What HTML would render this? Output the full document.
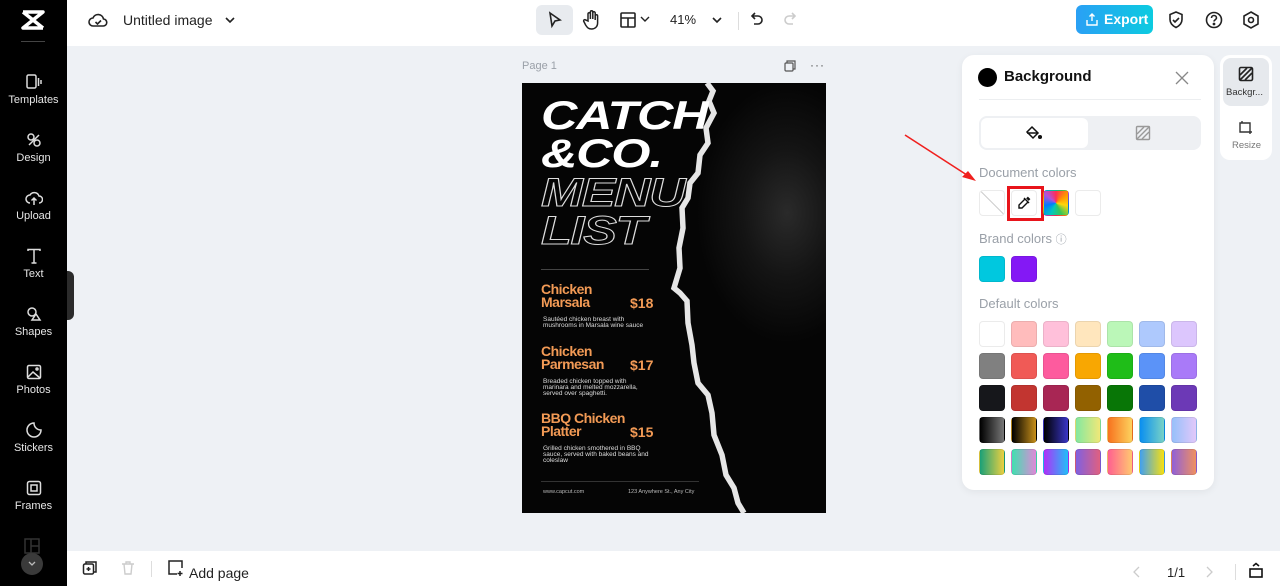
<!DOCTYPE html>
<html><head><meta charset="utf-8"><style>
*{box-sizing:border-box;margin:0;padding:0}
body{width:1280px;height:586px;overflow:hidden;background:#eef1f5;font-family:"Liberation Sans",sans-serif;position:relative;color:#1f2329}
.abs{position:absolute}
#side{left:0;top:0;width:67px;height:586px;background:#000}
.si{position:absolute;left:0;width:67px;text-align:center;color:#e6e6e6;font-size:11px}
.si svg{display:block;margin:0 auto 3px}
#top{left:67px;top:0;width:1213px;height:46px;background:#fff}
#bot{left:67px;top:551px;width:1213px;height:35px;background:#fff}
#panel{left:962px;top:55px;width:252px;height:435px;background:#fff;border-radius:12px;box-shadow:0 2px 8px rgba(0,0,0,.06)}
.sw{position:absolute;width:26px;height:26px;border-radius:4px;border:1px solid rgba(0,0,0,.08)}
.lbl{position:absolute;left:17px;font-size:13px;color:#9aa0a8}
.ttl{position:absolute;left:19px;font-size:40px;font-weight:bold;font-style:italic;line-height:38px;letter-spacing:-1px;transform:scaleX(1.26);transform-origin:0 0}
</style></head><body>
<div id="side" class="abs">
 <svg class="abs" style="left:20px;top:9px" width="26" height="22" viewBox="0 0 26 22"><path d="M3 3h20L3 19h20M3 3l20 16" stroke="#fff" stroke-width="3.5" fill="none" stroke-linejoin="round"/></svg>
 <div class="abs" style="left:21px;top:41px;width:24px;height:1px;background:#444"></div>
 <div class="si" style="top:73px"><svg width="18" height="18" viewBox="0 0 18 18" fill="none" stroke="#ddd" stroke-width="1.5"><rect x="2" y="2" width="9" height="13" rx="1.5"/><path d="M13.5 5v8M16 7v4"/></svg>Templates</div>
 <div class="si" style="top:131px"><svg width="18" height="18" viewBox="0 0 18 18" fill="none" stroke="#ddd" stroke-width="1.5"><circle cx="6" cy="6" r="3"/><circle cx="12" cy="12" r="3"/><path d="M4 14L14 4"/></svg>Design</div>
 <div class="si" style="top:189px"><svg width="18" height="18" viewBox="0 0 18 18" fill="none" stroke="#ddd" stroke-width="1.5"><path d="M5 14a4 4 0 010-8 5 5 0 019 1 3.5 3.5 0 010 7M9 16V9M6.5 11.5L9 9l2.5 2.5"/></svg>Upload</div>
 <div class="si" style="top:247px"><svg width="18" height="18" viewBox="0 0 18 18" fill="none" stroke="#ddd" stroke-width="1.5"><path d="M3 4V2.5h12V4M9 2.5V16M6.5 16h5"/></svg>Text</div>
 <div class="si" style="top:305px"><svg width="18" height="18" viewBox="0 0 18 18" fill="none" stroke="#ddd" stroke-width="1.5"><circle cx="7" cy="7" r="4"/><path d="M11 9l4 6H7z"/></svg>Shapes</div>
 <div class="si" style="top:363px"><svg width="18" height="18" viewBox="0 0 18 18" fill="none" stroke="#ddd" stroke-width="1.5"><rect x="2.5" y="2.5" width="13" height="13" rx="1.5"/><path d="M3 14l5-5 7 6"/><circle cx="12" cy="6" r="1"/></svg>Photos</div>
 <div class="si" style="top:421px"><svg width="18" height="18" viewBox="0 0 18 18" fill="none" stroke="#ddd" stroke-width="1.5"><path d="M16 9a7 7 0 11-7-7c0 4 3 7 7 7z"/></svg>Stickers</div>
 <div class="si" style="top:479px"><svg width="18" height="18" viewBox="0 0 18 18" fill="none" stroke="#ddd" stroke-width="1.5"><rect x="2.5" y="2.5" width="13" height="13" rx="2"/><rect x="6" y="6" width="6" height="6"/></svg>Frames</div>
 <svg class="abs" style="left:24px;top:538px" width="16" height="16" viewBox="0 0 16 16" fill="none" stroke="#333" stroke-width="1.5"><rect x="1" y="1" width="14" height="14"/><path d="M7 1v14M7 8h8"/></svg>
 <div class="abs" style="left:21px;top:553px;width:22px;height:22px;border-radius:50%;background:#3a3a3a"></div>
 <svg class="abs" style="left:27px;top:560px" width="10" height="8" viewBox="0 0 10 8"><path d="M2 2l3 3 3-3" stroke="#bbb" fill="none" stroke-width="1.3"/></svg>
</div>
<div class="abs" style="left:67px;top:271px;width:7px;height:49px;background:#2b2b2b;border-radius:0 6px 6px 0"></div>
<div id="top" class="abs">
 <svg class="abs" style="left:21px;top:11px" width="20" height="18" viewBox="0 0 20 18" fill="none" stroke="#222" stroke-width="1.6"><path d="M5 15a4 4 0 010-8 5.5 5.5 0 0110.5 1A3.5 3.5 0 0115 15z"/><path d="M7.5 11l2 2 3.5-3.5"/></svg>
 <div class="abs" style="left:56px;top:12px;font-size:14px;color:#222">Untitled image</div>
 <svg class="abs" style="left:157px;top:15px" width="12" height="10" viewBox="0 0 12 10"><path d="M2 3l4 4 4-4" stroke="#222" fill="none" stroke-width="1.6"/></svg>
 <div class="abs" style="left:469px;top:5px;width:37px;height:30px;background:#e8ebef;border-radius:6px"></div>
 <svg class="abs" style="left:479px;top:10px" width="18" height="20" viewBox="0 0 18 20" fill="none" stroke="#222" stroke-width="1.6"><path d="M4 3l10 7-5 1-3 5z"/></svg>
 <svg class="abs" style="left:515px;top:9px" width="20" height="22" viewBox="0 0 20 22" fill="none" stroke="#222" stroke-width="1.5"><path d="M6 12V5a1.2 1.2 0 012.4 0v5V3a1.2 1.2 0 012.4 0v7V4a1.2 1.2 0 012.4 0v7V7a1.2 1.2 0 012.4 0v7c0 4-3 6-6 6s-4-1-6-4l-2-4a1.2 1.2 0 012-1z"/></svg>
 <svg class="abs" style="left:552px;top:11px" width="18" height="18" viewBox="0 0 18 18" fill="none" stroke="#222" stroke-width="1.6"><rect x="2" y="2" width="14" height="14" rx="1"/><path d="M2 7h14M9 7v9"/></svg>
 <svg class="abs" style="left:573px;top:15px" width="10" height="8" viewBox="0 0 10 8"><path d="M1 2l4 4 4-4" stroke="#222" fill="none" stroke-width="1.4"/></svg>
 <div class="abs" style="left:603px;top:12px;font-size:13px;color:#222">41%</div>
 <svg class="abs" style="left:644px;top:15px" width="12" height="10" viewBox="0 0 12 10"><path d="M2 3l4 4 4-4" stroke="#222" fill="none" stroke-width="1.6"/></svg>
 <div class="abs" style="left:671px;top:12px;width:1px;height:18px;background:#ddd"></div>
 <svg class="abs" style="left:681px;top:10px" width="18" height="20" viewBox="0 0 18 20" fill="none" stroke="#222" stroke-width="1.6"><path d="M7 3L4 6l3 3M4 6h6a4 4 0 010 8H6"/></svg>
 <svg class="abs" style="left:714px;top:10px" width="18" height="20" viewBox="0 0 18 20" fill="none" stroke="#ccc" stroke-width="1.6"><path d="M11 3l3 3-3 3M14 6H8a4 4 0 000 8h4"/></svg>
 <div class="abs" style="left:1009px;top:5px;width:77px;height:29px;border-radius:6px;background:linear-gradient(90deg,#2aa0f5,#0ccbe0);color:#fff;font-size:14px;font-weight:bold;line-height:29px;padding-left:28px">Export</div>
 <svg class="abs" style="left:1018px;top:12px" width="14" height="15" viewBox="0 0 14 15" fill="none" stroke="#fff" stroke-width="1.4"><path d="M7 9V2M4.5 4.5L7 2l2.5 2.5M2 8v5h10V8"/></svg>
 <svg class="abs" style="left:1100px;top:10px" width="18" height="20" viewBox="0 0 18 20" fill="none" stroke="#222" stroke-width="1.6"><path d="M9 2l6 2.5v5c0 4-3 6.5-6 8-3-1.5-6-4-6-8v-5z"/><path d="M6 10l2 2 4-4"/></svg>
 <svg class="abs" style="left:1137px;top:10px" width="20" height="20" viewBox="0 0 20 20" fill="none" stroke="#222" stroke-width="1.6"><circle cx="10" cy="10" r="7.5"/><path d="M7.5 8a2.5 2.5 0 115 0c0 1.5-2.5 2-2.5 3.5"/><circle cx="10" cy="14" r=".6" fill="#222"/></svg>
 <svg class="abs" style="left:1174px;top:10px" width="20" height="20" viewBox="0 0 20 20" fill="none" stroke="#222" stroke-width="1.6"><path d="M10 2l7 4v8l-7 4-7-4V6z"/><circle cx="10" cy="10" r="2.5"/></svg>
</div>
<div class="abs" style="left:522px;top:60px;font-size:11px;color:#9aa0a8">Page 1</div>
<svg class="abs" style="left:783px;top:59px" width="14" height="14" viewBox="0 0 14 14" fill="none" stroke="#555" stroke-width="1.2"><rect x="2" y="4" width="8" height="8" rx="1"/><path d="M4 4V2h8v8h-2"/></svg>
<div class="abs" style="left:810px;top:58px;font-size:12px;color:#555;letter-spacing:1px">···</div>
<!-- document -->
<div class="abs" style="left:522px;top:83px;width:304px;height:430px;background:#050505;overflow:hidden">
 <div class="abs" style="left:0;top:0;width:304px;height:430px;background:radial-gradient(ellipse 90px 130px at 265px 130px,#2a2a2a 0%,#141414 50%,rgba(5,5,5,0) 100%)"></div>
 <svg class="abs" style="left:0;top:0" width="304" height="430" viewBox="0 0 304 430"><polyline points="185,0 191,8 187,18 192,30 184,45 186,60 178,72 176,90 168,100 166,115 160,125 161,145 157,165 158,185 152,205 158,210 165,218 166,240 170,262 172,280 176,300 186,312 190,330 192,352 200,372 204,392 212,405 216,420 222,430" fill="none" stroke="#e6e6e6" stroke-width="5.5" stroke-linejoin="miter"/></svg>
 <div class="ttl" style="top:14px;color:#fff">CATCH<br>&amp;CO.</div>
 <div class="ttl" style="top:91px;color:transparent;-webkit-text-stroke:1px #ddd">MENU<br>LIST</div>
 <div class="abs" style="left:19px;top:186px;width:108px;height:1px;background:#444"></div>
 <div class="abs" style="left:19px;top:200px;color:#f29a55;font-size:14px;line-height:13px;letter-spacing:-.5px;font-weight:bold">Chicken<br>Marsala</div>
 <div class="abs" style="left:108px;top:212px;color:#f29a55;font-size:14px;font-weight:bold">$18</div>
 <div class="abs" style="left:21px;top:234px;color:#ddd;font-size:6.5px;line-height:6px">Sautéed chicken breast with<br>mushrooms in Marsala wine sauce</div>
 <div class="abs" style="left:19px;top:262px;color:#f29a55;font-size:14px;line-height:13px;letter-spacing:-.5px;font-weight:bold">Chicken<br>Parmesan</div>
 <div class="abs" style="left:108px;top:274px;color:#f29a55;font-size:14px;font-weight:bold">$17</div>
 <div class="abs" style="left:21px;top:296px;color:#ddd;font-size:6.5px;line-height:6px">Breaded chicken topped with<br>marinara and melted mozzarella,<br>served over spaghetti.</div>
 <div class="abs" style="left:19px;top:329px;color:#f29a55;font-size:14px;line-height:13px;letter-spacing:-.5px;font-weight:bold">BBQ Chicken<br>Platter</div>
 <div class="abs" style="left:108px;top:341px;color:#f29a55;font-size:14px;font-weight:bold">$15</div>
 <div class="abs" style="left:21px;top:363px;color:#ddd;font-size:6.5px;line-height:6px">Grilled chicken smothered in BBQ<br>sauce, served with baked beans and<br>coleslaw</div>
 <div class="abs" style="left:19px;top:398px;width:158px;height:1px;background:#333"></div>
 <div class="abs" style="left:21px;top:406px;color:#bbb;font-size:5.5px">www.capcut.com</div>
 <div class="abs" style="left:106px;top:406px;color:#bbb;font-size:5.5px">123 Anywhere St., Any City</div>
</div>
<div id="panel" class="abs">
 <div class="abs" style="left:16px;top:13px;width:19px;height:19px;border-radius:50%;background:#000"></div>
 <div class="abs" style="left:42px;top:13px;font-size:15px;font-weight:bold;color:#111">Background</div>
 <svg class="abs" style="left:212px;top:15px" width="16" height="16" viewBox="0 0 16 16"><path d="M2 2l12 12M14 2L2 14" stroke="#888" stroke-width="1.3"/></svg>
 <div class="abs" style="left:17px;top:44px;width:222px;height:1px;background:#eceef0"></div>
 <div class="abs" style="left:17px;top:61px;width:222px;height:34px;background:#eef0f3;border-radius:8px"></div>
 <div class="abs" style="left:19px;top:63px;width:107px;height:30px;background:#fff;border-radius:6px"></div>
 <svg class="abs" style="left:63px;top:70px" width="18" height="16" viewBox="0 0 18 16" fill="none" stroke="#111" stroke-width="1.5"><path d="M7 2l6 6-5 5-6-6z"/><path d="M2 8h11" /><circle cx="15" cy="12" r="1.3" fill="#111"/></svg>
 <svg class="abs" style="left:173px;top:70px" width="16" height="16" viewBox="0 0 16 16" fill="none" stroke="#999" stroke-width="1.4"><rect x="1.5" y="1.5" width="13" height="13" rx="1"/><path d="M2 9l7-7M2 14L14 2M7 14l7-7"/></svg>
 <div class="lbl" style="top:110px">Document colors</div>
 <div class="sw" style="left:17px;top:135px;background:#fff;overflow:hidden"><div style="position:absolute;left:-5px;top:12px;width:36px;height:1px;background:#ccc;transform:rotate(45deg)"></div></div>
 <div class="sw" style="left:49px;top:135px;background:#fff"></div>
 <div class="abs" style="left:45px;top:131px;width:37px;height:35px;border:3px solid #e8141b"></div>
 <svg class="abs" style="left:55px;top:141px" width="14" height="14" viewBox="0 0 14 14" fill="none" stroke="#111" stroke-width="1.4"><path d="M8 3L2 9v3h3l6-6"/><path d="M7 2l5 5"/><path d="M10 1.5l2.5 2.5" stroke-width="2.5"/></svg>
 <div class="sw" style="left:81px;top:135px;background:conic-gradient(#ff2d55,#ff9500,#ffd60a,#34c759,#00c7be,#007aff,#af52de,#ff2d55)"></div>
 <div class="sw" style="left:113px;top:135px;background:#fff"></div>
 <div class="lbl" style="top:176px">Brand colors <span style="font-size:11px">ⓘ</span></div>
 <div class="sw" style="left:17px;top:201px;background:#00c8df"></div>
 <div class="sw" style="left:49px;top:201px;background:#8418f5"></div>
 <div class="lbl" style="top:241px">Default colors</div>
 <div class="sw" style="left:17px;top:266px;background:#fff"></div><div class="sw" style="left:49px;top:266px;background:#ffbcbc"></div><div class="sw" style="left:81px;top:266px;background:#ffc0da"></div><div class="sw" style="left:113px;top:266px;background:#ffe6bd"></div><div class="sw" style="left:145px;top:266px;background:#bbf7b8"></div><div class="sw" style="left:177px;top:266px;background:#aec9fd"></div><div class="sw" style="left:209px;top:266px;background:#dcc6fd"></div>
 <div class="sw" style="left:17px;top:298px;background:#808080"></div><div class="sw" style="left:49px;top:298px;background:#f05a56"></div><div class="sw" style="left:81px;top:298px;background:#fd5b9e"></div><div class="sw" style="left:113px;top:298px;background:#f8a702"></div><div class="sw" style="left:145px;top:298px;background:#1fbd18"></div><div class="sw" style="left:177px;top:298px;background:#5b93f8"></div><div class="sw" style="left:209px;top:298px;background:#a97af8"></div>
 <div class="sw" style="left:17px;top:330px;background:#16171b"></div><div class="sw" style="left:49px;top:330px;background:#c23530"></div><div class="sw" style="left:81px;top:330px;background:#a82654"></div><div class="sw" style="left:113px;top:330px;background:#926100"></div><div class="sw" style="left:145px;top:330px;background:#087606"></div><div class="sw" style="left:177px;top:330px;background:#1f4ea8"></div><div class="sw" style="left:209px;top:330px;background:#6c39b6"></div>
 <div class="sw" style="left:17px;top:362px;background:linear-gradient(90deg,#000,#777)"></div><div class="sw" style="left:49px;top:362px;background:linear-gradient(90deg,#000,#c8901a)"></div><div class="sw" style="left:81px;top:362px;background:linear-gradient(90deg,#000,#3a36c8)"></div><div class="sw" style="left:113px;top:362px;background:linear-gradient(90deg,#84e8a0,#f0e878)"></div><div class="sw" style="left:145px;top:362px;background:linear-gradient(90deg,#f8721e,#fcd25e)"></div><div class="sw" style="left:177px;top:362px;background:linear-gradient(90deg,#0a8ff0,#78d2c6)"></div><div class="sw" style="left:209px;top:362px;background:linear-gradient(90deg,#96c0fa,#e2c8fa)"></div>
 <div class="sw" style="left:17px;top:394px;background:linear-gradient(90deg,#1aa078,#ecd040)"></div><div class="sw" style="left:49px;top:394px;background:linear-gradient(90deg,#40e0b0,#e088d8)"></div><div class="sw" style="left:81px;top:394px;background:linear-gradient(90deg,#b030f8,#20c0f8)"></div><div class="sw" style="left:113px;top:394px;background:linear-gradient(90deg,#8060e0,#e06080)"></div><div class="sw" style="left:145px;top:394px;background:linear-gradient(90deg,#ff6090,#ffc870)"></div><div class="sw" style="left:177px;top:394px;background:linear-gradient(90deg,#40a0f0,#f8e010)"></div><div class="sw" style="left:209px;top:394px;background:linear-gradient(90deg,#9060d8,#f09060)"></div>
</div>
<svg class="abs" style="left:900px;top:130px" width="85" height="60" viewBox="0 0 85 60"><path d="M5 5L70 47" stroke="#f0201e" stroke-width="1.6"/><path d="M76 51L62 47L68 41Z" fill="#f0201e"/></svg>
<div class="abs" style="left:1220px;top:55px;width:52px;height:105px;background:#fff;border-radius:10px"></div>
<div class="abs" style="left:1223px;top:58px;width:46px;height:48px;background:#e6e9ed;border-radius:8px"></div>
<svg class="abs" style="left:1238px;top:66px" width="16" height="16" viewBox="0 0 16 16" fill="none" stroke="#222" stroke-width="1.6"><rect x="1.5" y="1.5" width="13" height="13" rx="1.5"/><path d="M2 9l7-7M2 14L14 2M7 14l7-7"/></svg>
<div class="abs" style="left:1226px;top:87px;font-size:9.5px;color:#333">Backgr...</div>
<svg class="abs" style="left:1238px;top:119px" width="16" height="16" viewBox="0 0 16 16" fill="none" stroke="#333" stroke-width="1.4"><path d="M2 4h10v9H2zM4 2v2M12 8v7M10 13h4"/></svg>
<div class="abs" style="left:1232px;top:140px;font-size:9.5px;color:#777">Resize</div>
<div id="bot" class="abs">
 <svg class="abs" style="left:15px;top:9px" width="16" height="16" viewBox="0 0 16 16" fill="none" stroke="#222" stroke-width="1.5"><rect x="1.5" y="4" width="10" height="10" rx="1.5"/><path d="M4 4V2h10v10h-2M6.5 7v4M4.5 9h4"/></svg>
 <svg class="abs" style="left:53px;top:9px" width="16" height="16" viewBox="0 0 16 16" fill="none" stroke="#ccc" stroke-width="1.4"><path d="M2 4h12M6 4V2h4v2M4 4l1 10h6l1-10"/></svg>
 <div class="abs" style="left:84px;top:10px;width:1px;height:16px;background:#ddd"></div>
 <svg class="abs" style="left:100px;top:8px" width="18" height="18" viewBox="0 0 18 18" fill="none" stroke="#222" stroke-width="1.5"><path d="M15 9V2H2v13h8M13 12v5M10.5 14.5h5"/></svg>
 <div class="abs" style="left:122px;top:14px;font-size:14px;color:#222">Add page</div>
 <svg class="abs" style="left:1065px;top:14px" width="10" height="14" viewBox="0 0 10 14"><path d="M7 2L2 7l5 5" stroke="#ccc" fill="none" stroke-width="1.3"/></svg>
 <div class="abs" style="left:1100px;top:14px;font-size:13px;color:#222">1/1</div>
 <svg class="abs" style="left:1137px;top:14px" width="10" height="14" viewBox="0 0 10 14"><path d="M3 2l5 5-5 5" stroke="#ccc" fill="none" stroke-width="1.3"/></svg>
 <div class="abs" style="left:1168px;top:13px;width:1px;height:16px;background:#ddd"></div>
 <svg class="abs" style="left:1181px;top:11px" width="16" height="16" viewBox="0 0 16 16" fill="none" stroke="#111" stroke-width="1.6"><rect x="2" y="7" width="12" height="8"/><path d="M5 4l3-2.5L11 4"/></svg>
</div>
</body></html>
